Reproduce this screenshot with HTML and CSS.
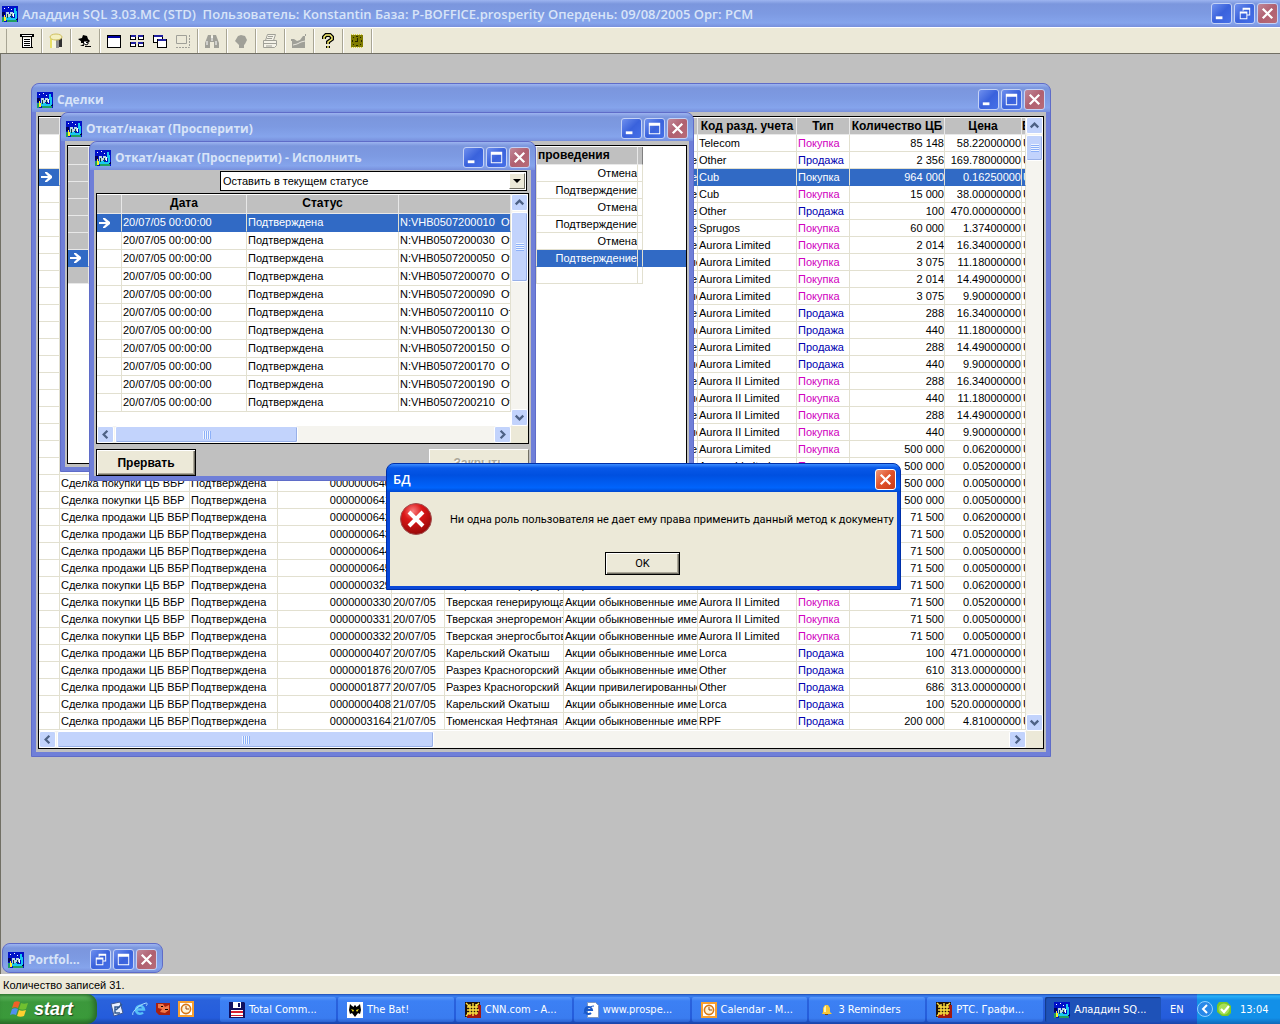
FILE: index.html
```html
<!DOCTYPE html>
<html lang="ru">
<head>
  <meta charset="UTF-8" />
  <meta name="viewport" content="width=device-width, initial-scale=1" />
  <title>Аладдин SQL</title>
  <link rel="stylesheet" href="styles.css">
</head>
<body>
  <!-- Shared icons -->
  <svg width="0" height="0" class="defs">
    <symbol id="app" viewBox="0 0 16 16">
      <path fill="#0010c8" d="M0 0h16v16H0z"/>
      <path fill="#000058" d="M0 6h3v4H0zM12 12h4v2h-4z"/>
      <path fill="#18c8f0" d="M12 2h2v3h1v8h-2V8h-1zM4 11h5v3H4zM9 12h5v2H9z"/>
      <path fill="#b8d8e0" d="M4 6h3v5H4zM8 6h3v4H8zM7 8h1v3H7z"/>
      <path fill="#104048" d="M5 8h1v4H5zM9 8h1v4H9z"/>
      <path fill="#fff" d="M2 2h1v1H2zM6 1h1v1H6zM9 3h1v1H9zM11 7h1v4h-1z"/>
      <path fill="#20a060" d="M0 11h2v5H0zM5 14h10v2H5z"/>
      <path fill="#ffee30" d="M2 9h1v2h1v4H2z"/>
    </symbol>
    <symbol id="min" viewBox="0 0 20 20"><path fill="#fff" d="M4 13h7v3H4z"/></symbol>
    <symbol id="max" viewBox="0 0 20 20"><path fill="#fff" fill-rule="evenodd" d="M4 4h12v12H4zM5 7v8h10V7z"/></symbol>
    <symbol id="restore" viewBox="0 0 20 20"><path fill="#fff" fill-rule="evenodd" d="M8 4h8v8h-3v-1h2V6H9v1H8zM5 8h8v8H5zM6 10v5h6v-5z"/></symbol>
    <symbol id="close" viewBox="0 0 20 20"><path stroke="#fff" stroke-width="2.4" d="M5 5l10 10M15 5L5 15"/></symbol>
    <symbol id="up" viewBox="0 0 16 16"><path fill="none" stroke="#4d6185" stroke-width="2.4" d="M4 10l4-4 4 4"/></symbol>
    <symbol id="down" viewBox="0 0 16 16"><path fill="none" stroke="#4d6185" stroke-width="2.4" d="M4 6l4 4 4-4"/></symbol>
    <symbol id="left" viewBox="0 0 16 16"><path fill="none" stroke="#4d6185" stroke-width="2.4" d="M10 4L6 8l4 4"/></symbol>
    <symbol id="right" viewBox="0 0 16 16"><path fill="none" stroke="#4d6185" stroke-width="2.4" d="M6 4l4 4-4 4"/></symbol>
    <symbol id="cur" viewBox="0 0 12 10"><path fill="#fff" d="M0 4h7L4 1V0h2l5 4v2l-5 4H4V9l3-3H0z"/></symbol>
    <symbol id="rts" viewBox="0 0 16 16">
      <path fill="#201008" d="M0 0h15v15H0z"/><path fill="#a01810" d="M2 12h14v4H2zM13 3h3v12h-3z"/>
      <path stroke="#ffe040" stroke-width="1.4" d="M2 5h11M2 8h12M2 11h11M5 2v11M8 1v13M11 2v11M1 1l3 3M14 1l-3 3M1 14l3-3"/>
    </symbol>
    <symbol id="clock" viewBox="0 0 16 16">
      <path fill="#f8a030" d="M0 0h16v16H0z"/><path fill="#fff" d="M2 2h12v12H2z"/>
      <circle cx="8" cy="8" r="4.6" fill="#fff4d8" stroke="#d87818" stroke-width="1.6"/><path fill="none" stroke="#a04808" d="M8 5v3h3"/>
    </symbol>
  </svg>

  <header class="app-title">
    <svg class="ico"><use href="#app"/></svg>
    <h1>Аладдин SQL 3.03.MC (STD) &nbsp;Пользователь: Konstantin База: P-BOFFICE.prosperity Опердень: 09/08/2005 Орг: РСМ</h1>
    <div class="ctl">
      <button aria-label="Свернуть"><svg><use href="#min"/></svg></button>
      <button aria-label="Восстановить"><svg><use href="#restore"/></svg></button>
      <button class="x" aria-label="Закрыть"><svg><use href="#close"/></svg></button>
    </div>
  </header>

  <nav class="toolbar">
    <div class="group first">
      <button aria-label="Список"><svg viewBox="0 0 16 16"><path d="M1 1h14v3H1zM3 4h1v11H3zM12 4h1v11h-1zM3 14h11v1H3z"/><path fill="#fff" d="M3 2h10v1H3zM4 5h8v9H4z"/><path d="M5 6h6v1H5zM5 8h6v1H5zM5 10h6v1H5zM5 12h6v1H5z"/></svg></button>
    </div>
    <div class="group">
      <button aria-label="База"><svg viewBox="0 0 16 16"><path fill="#e8e068" d="M2 3h6v12H2z"/><path fill="#f8f8e0" d="M4 4h4v11H4z"/><path fill="#909090" d="M8 4h3v11H8z"/><path d="M11 5h3v9h-3z" fill="#303030"/><ellipse cx="8" cy="4" rx="6" ry="3" fill="#f4f0c0" stroke="#d0c060"/></svg></button>
    </div>
    <div class="group">
      <button aria-label="Агент"><svg viewBox="0 0 16 16"><path d="M1 6l4-1 1-3 4 1 1 3 2 2-1 1H5z"/><path fill="#fff" stroke="#000" d="M6 8h5v3l-2 1-3-2z"/><path d="M4 8h3v2H4zM9 9h2v1H9zM3 13l4-2v2zM8 13h6v1H8z"/></svg></button>
    </div>
    <div class="group">
      <button aria-label="Окно"><svg viewBox="0 0 16 16"><path d="M1 2h14v13H1z"/><path fill="#0000a0" d="M2 3h12v2H2z"/><path fill="#fff" d="M2 5h12v9H2z"/></svg></button>
      <button aria-label="Мозаика"><svg viewBox="0 0 16 16"><path d="M1 2h6v5H1zM9 2h6v5H9zM1 9h6v5H1zM9 9h6v5H9z"/><path fill="#2020a0" d="M2 2h5v2H2zM9 2h5v2H9zM2 9h5v2H2zM9 9h5v2H9z"/><path fill="#fff" d="M2 4h4v2H2zM10 4h4v2h-4zM2 11h4v2H2zM10 11h4v2h-4z"/></svg></button>
      <button aria-label="Каскад"><svg viewBox="0 0 16 16"><path d="M1 2h10v8H1zM5 6h10v9H5z"/><path fill="#2020a0" d="M2 2h9v2H2zM6 6h8v2H6z"/><path fill="#fff" d="M2 4h8v2H5v3H2zM6 8h8v6H6z"/></svg></button>
      <button aria-label="Упорядочить" disabled><svg viewBox="0 0 16 16"><path fill="none" stroke="#a0a098" d="M1.500 2.500h10v8h-10z"/><path fill="none" stroke="#a0a098" stroke-dasharray="2 1" d="M1 14.500h13.500V2"/></svg></button>
    </div>
    <div class="group">
      <button aria-label="Найти" disabled><svg viewBox="0 0 16 16"><path fill="#a0a098" d="M4 2h3v3h2V2h3l3 8v5h-5V9H6v6H1v-5z"/><path stroke="#fff" d="M3 8v4M12 8v4M8 3v5"/></svg></button>
    </div>
    <div class="group">
      <button aria-label="Стоп" disabled><svg viewBox="0 0 16 16"><path fill="#a0a098" d="M5 3l3-1 4 1 2 4-2 4-1 1v3H6v-3L2 8z"/></svg></button>
    </div>
    <div class="group">
      <button aria-label="Печать" disabled><svg viewBox="0 0 16 16"><path fill="#f4f2e8" stroke="#a0a098" d="M5.500 1.500h8l-2 6h-8zM1.500 7.500h13v5l-2 2h-11z"/><path stroke="#a0a098" d="M6 3.500h5M5 5.500h5M2 10.500h12M4 13h6"/></svg></button>
    </div>
    <div class="group">
      <button aria-label="График" disabled><svg viewBox="0 0 16 16"><path fill="#a0a098" d="M0 6h3l3 2 3-1 3-4h2V1h1v2h-1v12H1V8H0z"/><path stroke="#e8e6dc" fill="none" d="M2 12l4-1 4-2 4-1"/></svg></button>
    </div>
    <div class="group">
      <button aria-label="Справка"><svg viewBox="0 0 16 16"><path fill="none" stroke="#000" stroke-width="4" d="M4 6V4l2-2h4l2 2v2l-4 3v2M8 13v2"/><path fill="none" stroke="#f8f070" stroke-width="1.500" d="M4 6V4l2-2h4l2 2v2l-4 3v2M8 13v2"/></svg></button>
    </div>
    <div class="group">
      <button aria-label="Часы"><svg viewBox="0 0 16 16"><path fill="#807c00" d="M2 2h12v12H2z"/><path fill="#282800" d="M7 3h2v1H7zM4 4h1v1H4zM11 4h1v1h-1zM3 7h1v2H3zM12 7h1v2h-1zM7 12h2v1H7zM4 11h1v1H4zM11 11h1v1h-1zM8 5h1v3H8zM6 8h3v1H6z"/><path fill="none" stroke="#d8d040" stroke-dasharray="1 1" d="M2 1.500h12M2 14.500h12"/></svg></button>
    </div>
  </nav>

  <main class="workspace">
    <!-- Сделки -->
    <section class="win win-deals">
      <header class="bar">
        <svg class="ico"><use href="#app"/></svg>
        <h2>Сделки</h2>
        <div class="ctl">
          <button aria-label="Свернуть"><svg><use href="#min"/></svg></button>
          <button aria-label="Развернуть"><svg><use href="#max"/></svg></button>
          <button class="x" aria-label="Закрыть"><svg><use href="#close"/></svg></button>
        </div>
      </header>
      <div class="client">
        <div class="grid">
          <div class="view">
            <table class="deals">
              <colgroup><col class="c-sel"><col class="c-kind"><col class="c-state"><col class="c-num"><col class="c-date"><col class="c-issuer"><col class="c-paper"><col class="c-code"><col class="c-type"><col class="c-qty"><col class="c-price"><col></colgroup>
              <thead>
                <tr><th></th><th></th><th></th><th></th><th></th><th></th><th></th><th>Код разд. учета</th><th>Тип</th><th>Количество ЦБ</th><th>Цена</th><th class="cut">В</th></tr>
              </thead>
              <tbody>
                <tr><td></td><td></td><td></td><td></td><td></td><td></td><td></td><td>Telecom</td><td class="buy">Покупка</td><td>85 148</td><td>58.22000000</td><td>U</td></tr>
                <tr><td></td><td></td><td></td><td></td><td></td><td></td><td>Акции обыкновенные именные</td><td>Other</td><td class="sell">Продажа</td><td>2 356</td><td>169.78000000</td><td>U</td></tr>
                <tr class="on"><td><svg class="cur"><use href="#cur"/></svg></td><td></td><td></td><td></td><td></td><td></td><td>Акции обыкновенные именные</td><td>Cub</td><td>Покупка</td><td>964 000</td><td>0.16250000</td><td>U</td></tr>
                <tr><td></td><td></td><td></td><td></td><td></td><td></td><td>Акции обыкновенные именные</td><td>Cub</td><td class="buy">Покупка</td><td>15 000</td><td>38.00000000</td><td>U</td></tr>
                <tr><td></td><td></td><td></td><td></td><td></td><td></td><td>Акции обыкновенные именные</td><td>Other</td><td class="sell">Продажа</td><td>100</td><td>470.00000000</td><td>U</td></tr>
                <tr><td></td><td></td><td></td><td></td><td></td><td></td><td>Акции обыкновенные именные</td><td>Sprugos</td><td class="buy">Покупка</td><td>60 000</td><td>1.37400000</td><td>U</td></tr>
                <tr><td></td><td></td><td></td><td></td><td></td><td></td><td>Акции обыкновенные именные</td><td>Aurora Limited</td><td class="buy">Покупка</td><td>2 014</td><td>16.34000000</td><td>U</td></tr>
                <tr><td></td><td></td><td></td><td></td><td></td><td></td><td>Акции привилегированные</td><td>Aurora Limited</td><td class="buy">Покупка</td><td>3 075</td><td>11.18000000</td><td>U</td></tr>
                <tr><td></td><td></td><td></td><td></td><td></td><td></td><td>Акции обыкновенные именные</td><td>Aurora Limited</td><td class="buy">Покупка</td><td>2 014</td><td>14.49000000</td><td>U</td></tr>
                <tr><td></td><td></td><td></td><td></td><td></td><td></td><td>Акции привилегированные</td><td>Aurora Limited</td><td class="buy">Покупка</td><td>3 075</td><td>9.90000000</td><td>U</td></tr>
                <tr><td></td><td></td><td></td><td></td><td></td><td></td><td>Акции обыкновенные именные</td><td>Aurora Limited</td><td class="sell">Продажа</td><td>288</td><td>16.34000000</td><td>U</td></tr>
                <tr><td></td><td></td><td></td><td></td><td></td><td></td><td>Акции привилегированные</td><td>Aurora Limited</td><td class="sell">Продажа</td><td>440</td><td>11.18000000</td><td>U</td></tr>
                <tr><td></td><td></td><td></td><td></td><td></td><td></td><td>Акции обыкновенные именные</td><td>Aurora Limited</td><td class="sell">Продажа</td><td>288</td><td>14.49000000</td><td>U</td></tr>
                <tr><td></td><td></td><td></td><td></td><td></td><td></td><td>Акции привилегированные</td><td>Aurora Limited</td><td class="sell">Продажа</td><td>440</td><td>9.90000000</td><td>U</td></tr>
                <tr><td></td><td></td><td></td><td></td><td></td><td></td><td>Акции обыкновенные именные</td><td>Aurora II Limited</td><td class="buy">Покупка</td><td>288</td><td>16.34000000</td><td>U</td></tr>
                <tr><td></td><td></td><td></td><td></td><td></td><td></td><td>Акции привилегированные</td><td>Aurora II Limited</td><td class="buy">Покупка</td><td>440</td><td>11.18000000</td><td>U</td></tr>
                <tr><td></td><td></td><td></td><td></td><td></td><td></td><td>Акции обыкновенные именные</td><td>Aurora II Limited</td><td class="buy">Покупка</td><td>288</td><td>14.49000000</td><td>U</td></tr>
                <tr><td></td><td></td><td></td><td></td><td></td><td></td><td>Акции привилегированные</td><td>Aurora II Limited</td><td class="buy">Покупка</td><td>440</td><td>9.90000000</td><td>U</td></tr>
                <tr><td></td><td></td><td></td><td></td><td></td><td></td><td>Акции обыкновенные именные</td><td>Aurora Limited</td><td class="buy">Покупка</td><td>500 000</td><td>0.06200000</td><td>U</td></tr>
                <tr><td></td><td></td><td></td><td></td><td></td><td></td><td>Акции обыкновенные именные</td><td>Aurora Limited</td><td class="buy">Покупка</td><td>500 000</td><td>0.05200000</td><td>U</td></tr>
                <tr><td></td><td>Сделка покупки ЦБ ВБР</td><td>Подтверждена</td><td>0000000640</td><td></td><td></td><td></td><td></td><td></td><td>500 000</td><td>0.00500000</td><td>U</td></tr>
                <tr><td></td><td>Сделка покупки ЦБ ВБР</td><td>Подтверждена</td><td>0000000641</td><td></td><td></td><td></td><td></td><td></td><td>500 000</td><td>0.00500000</td><td>U</td></tr>
                <tr><td></td><td>Сделка продажи ЦБ ВБР</td><td>Подтверждена</td><td>0000000642</td><td></td><td></td><td></td><td></td><td></td><td>71 500</td><td>0.06200000</td><td>U</td></tr>
                <tr><td></td><td>Сделка продажи ЦБ ВБР</td><td>Подтверждена</td><td>0000000643</td><td></td><td></td><td></td><td></td><td></td><td>71 500</td><td>0.05200000</td><td>U</td></tr>
                <tr><td></td><td>Сделка продажи ЦБ ВБР</td><td>Подтверждена</td><td>0000000644</td><td></td><td></td><td></td><td></td><td></td><td>71 500</td><td>0.00500000</td><td>U</td></tr>
                <tr><td></td><td>Сделка продажи ЦБ ВБР</td><td>Подтверждена</td><td>0000000645</td><td></td><td></td><td></td><td></td><td></td><td>71 500</td><td>0.00500000</td><td>U</td></tr>
                <tr><td></td><td>Сделка покупки ЦБ ВБР</td><td>Подтверждена</td><td>0000000329</td><td>20/07/05</td><td>Тверская генерирующая</td><td>Акции обыкновенные именные</td><td>Aurora II Limited</td><td class="buy">Покупка</td><td>71 500</td><td>0.06200000</td><td>U</td></tr>
                <tr><td></td><td>Сделка покупки ЦБ ВБР</td><td>Подтверждена</td><td>0000000330</td><td>20/07/05</td><td>Тверская генерирующая</td><td>Акции обыкновенные именные</td><td>Aurora II Limited</td><td class="buy">Покупка</td><td>71 500</td><td>0.05200000</td><td>U</td></tr>
                <tr><td></td><td>Сделка покупки ЦБ ВБР</td><td>Подтверждена</td><td>0000000331</td><td>20/07/05</td><td>Тверская энергоремонтная</td><td>Акции обыкновенные именные</td><td>Aurora II Limited</td><td class="buy">Покупка</td><td>71 500</td><td>0.00500000</td><td>U</td></tr>
                <tr><td></td><td>Сделка покупки ЦБ ВБР</td><td>Подтверждена</td><td>0000000332</td><td>20/07/05</td><td>Тверская энергосбытовая</td><td>Акции обыкновенные именные</td><td>Aurora II Limited</td><td class="buy">Покупка</td><td>71 500</td><td>0.00500000</td><td>U</td></tr>
                <tr><td></td><td>Сделка продажи ЦБ ВБР</td><td>Подтверждена</td><td>0000000407</td><td>20/07/05</td><td>Карельский Окатыш</td><td>Акции обыкновенные именные</td><td>Lorca</td><td class="sell">Продажа</td><td>100</td><td>471.00000000</td><td>U</td></tr>
                <tr><td></td><td>Сделка продажи ЦБ ВБР</td><td>Подтверждена</td><td>0000001876</td><td>20/07/05</td><td>Разрез Красногорский</td><td>Акции обыкновенные именные</td><td>Other</td><td class="sell">Продажа</td><td>610</td><td>313.00000000</td><td>U</td></tr>
                <tr><td></td><td>Сделка продажи ЦБ ВБР</td><td>Подтверждена</td><td>0000001877</td><td>20/07/05</td><td>Разрез Красногорский</td><td>Акции привилегированные</td><td>Other</td><td class="sell">Продажа</td><td>686</td><td>313.00000000</td><td>U</td></tr>
                <tr><td></td><td>Сделка продажи ЦБ ВБР</td><td>Подтверждена</td><td>0000000408</td><td>21/07/05</td><td>Карельский Окатыш</td><td>Акции обыкновенные именные</td><td>Lorca</td><td class="sell">Продажа</td><td>100</td><td>520.00000000</td><td>U</td></tr>
                <tr><td></td><td>Сделка продажи ЦБ ВБР</td><td>Подтверждена</td><td>0000003164</td><td>21/07/05</td><td>Тюменская Нефтяная</td><td>Акции обыкновенные именные</td><td>RPF</td><td class="sell">Продажа</td><td>200 000</td><td>4.81000000</td><td>U</td></tr>
              </tbody>
            </table>
          </div>
          <div class="vscroll">
            <button aria-label="Вверх"><svg><use href="#up"/></svg></button>
            <div class="thumb short"></div>
            <button aria-label="Вниз"><svg><use href="#down"/></svg></button>
          </div>
          <div class="hscroll">
            <button aria-label="Влево"><svg><use href="#left"/></svg></button>
            <div class="thumb wide"></div>
            <button aria-label="Вправо"><svg><use href="#right"/></svg></button>
          </div>
          <div class="corner"></div>
        </div>
      </div>
    </section>

    <!-- Откат/накат -->
    <section class="win win-rollback">
      <header class="bar">
        <svg class="ico"><use href="#app"/></svg>
        <h2>Откат/накат (Просперити)</h2>
        <div class="ctl">
          <button aria-label="Свернуть"><svg><use href="#min"/></svg></button>
          <button aria-label="Развернуть"><svg><use href="#max"/></svg></button>
          <button class="x" aria-label="Закрыть"><svg><use href="#close"/></svg></button>
        </div>
      </header>
      <div class="client">
        <div class="grid single">
          <table class="methods">
            <colgroup><col class="m-sel"><col class="m-name"><col class="m-act"><col class="m-end"><col></colgroup>
            <thead>
              <tr><th></th><th></th><th>проведения</th><th class="edge"></th><td class="out"></td></tr>
            </thead>
            <tbody>
              <tr><th></th><td></td><td>Отмена</td><td></td><td class="out"></td></tr>
              <tr><th></th><td></td><td>Подтверждение</td><td></td><td class="out"></td></tr>
              <tr><th></th><td></td><td>Отмена</td><td></td><td class="out"></td></tr>
              <tr><th></th><td></td><td>Подтверждение</td><td></td><td class="out"></td></tr>
              <tr><th></th><td></td><td>Отмена</td><td></td><td class="out"></td></tr>
              <tr class="on"><th><svg class="cur"><use href="#cur"/></svg></th><td></td><td>Подтверждение</td><td></td><td class="out"></td></tr>
              <tr><th></th><td></td><td></td><td></td><td class="out"></td></tr>
            </tbody>
          </table>
        </div>
      </div>
    </section>

    <!-- Исполнить -->
    <section class="win win-run">
      <header class="bar">
        <svg class="ico"><use href="#app"/></svg>
        <h2>Откат/накат (Просперити) - Исполнить</h2>
        <div class="ctl">
          <button aria-label="Свернуть"><svg><use href="#min"/></svg></button>
          <button aria-label="Развернуть"><svg><use href="#max"/></svg></button>
          <button class="x" aria-label="Закрыть"><svg><use href="#close"/></svg></button>
        </div>
      </header>
      <div class="client">
        <div class="combo">
          <select aria-label="Статус"><option>Оставить в текущем статусе</option></select>
          <span class="drop"></span>
        </div>
        <div class="grid">
          <div class="view">
            <table class="docs">
              <colgroup><col class="d-sel"><col class="d-date"><col class="d-state"><col></colgroup>
              <thead>
                <tr><th></th><th>Дата</th><th>Статус</th><th></th></tr>
              </thead>
              <tbody>
                <tr class="on"><td><svg class="cur"><use href="#cur"/></svg></td><td>20/07/05 00:00:00</td><td>Подтверждена</td><td>N:VHB0507200010 &nbsp;От</td></tr>
                <tr><td></td><td>20/07/05 00:00:00</td><td>Подтверждена</td><td>N:VHB0507200030 &nbsp;От</td></tr>
                <tr><td></td><td>20/07/05 00:00:00</td><td>Подтверждена</td><td>N:VHB0507200050 &nbsp;От</td></tr>
                <tr><td></td><td>20/07/05 00:00:00</td><td>Подтверждена</td><td>N:VHB0507200070 &nbsp;От</td></tr>
                <tr><td></td><td>20/07/05 00:00:00</td><td>Подтверждена</td><td>N:VHB0507200090 &nbsp;От</td></tr>
                <tr><td></td><td>20/07/05 00:00:00</td><td>Подтверждена</td><td>N:VHB0507200110 &nbsp;От</td></tr>
                <tr><td></td><td>20/07/05 00:00:00</td><td>Подтверждена</td><td>N:VHB0507200130 &nbsp;От</td></tr>
                <tr><td></td><td>20/07/05 00:00:00</td><td>Подтверждена</td><td>N:VHB0507200150 &nbsp;От</td></tr>
                <tr><td></td><td>20/07/05 00:00:00</td><td>Подтверждена</td><td>N:VHB0507200170 &nbsp;От</td></tr>
                <tr><td></td><td>20/07/05 00:00:00</td><td>Подтверждена</td><td>N:VHB0507200190 &nbsp;От</td></tr>
                <tr><td></td><td>20/07/05 00:00:00</td><td>Подтверждена</td><td>N:VHB0507200210 &nbsp;От</td></tr>
              </tbody>
            </table>
          </div>
          <div class="vscroll">
            <button aria-label="Вверх"><svg><use href="#up"/></svg></button>
            <div class="thumb tall"></div>
            <button aria-label="Вниз"><svg><use href="#down"/></svg></button>
          </div>
          <div class="hscroll">
            <button aria-label="Влево"><svg><use href="#left"/></svg></button>
            <div class="thumb mid"></div>
            <button aria-label="Вправо"><svg><use href="#right"/></svg></button>
          </div>
          <div class="corner"></div>
        </div>
        <div class="actions">
          <button class="btn">Прервать</button>
          <button class="btn" disabled>Закрыть</button>
        </div>
      </div>
    </section>

    <!-- Minimized window -->
    <section class="win win-min">
      <header class="bar">
        <svg class="ico"><use href="#app"/></svg>
        <h2>Portfol...</h2>
        <div class="ctl">
          <button aria-label="Восстановить"><svg><use href="#restore"/></svg></button>
          <button aria-label="Развернуть"><svg><use href="#max"/></svg></button>
          <button class="x" aria-label="Закрыть"><svg><use href="#close"/></svg></button>
        </div>
      </header>
    </section>

    <!-- Error message -->
    <section class="dialog" role="alertdialog" aria-labelledby="dlg-title">
      <header class="bar">
        <h2 id="dlg-title">БД</h2>
        <div class="ctl">
          <button class="x" aria-label="Закрыть"><svg><use href="#close"/></svg></button>
        </div>
      </header>
      <div class="dialog-body">
        <div class="message">
          <svg class="error" viewBox="0 0 32 32">
            <defs><radialGradient id="red" cx="40%" cy="25%" r="75%"><stop offset="0" stop-color="#f88080"/><stop offset=".4" stop-color="#dc1818"/><stop offset="1" stop-color="#980808"/></radialGradient></defs>
            <circle cx="16" cy="16" r="15.500" fill="url(#red)" stroke="#a05050"/>
            <path stroke="#fff" stroke-width="4" d="M9 9l14 14M23 9L9 23"/>
          </svg>
          <p>Ни одна роль пользователя не дает ему права применить данный метод к документу</p>
        </div>
        <button class="ok">OK</button>
      </div>
    </section>
  </main>

  <div class="status">Количество записей 31.</div>

  <footer class="taskbar">
    <button class="start">
      <svg viewBox="0 0 20 20"><path fill="#f06028" d="M4 3c2-1 4-1 6 0L8 9C6 8 4 8 2 9z"/><path fill="#70c030" d="M11 4c2 1 4 1 7 0l-2 6c-2 1-5 1-7 0z"/><path fill="#5090f0" d="M2 10c2-1 4-1 6 0l-2 6c-2-1-4-1-6 0z"/><path fill="#ffd030" d="M9 11c2 1 4 1 7 0l-2 6c-2 1-5 1-7 0z"/></svg>
      start
    </button>
    <div class="quick">
      <button aria-label="Рабочий стол"><svg viewBox="0 0 16 16"><path fill="#e8f0ff" stroke="#405890" d="M2 3l9-2 3 11-9 3z"/><path fill="none" stroke="#305890" stroke-width="1.500" d="M11 6H6v6h5M7 9l6-6"/></svg></button>
      <button aria-label="Internet Explorer"><svg viewBox="0 0 16 16"><path fill="none" stroke="#58c0f8" stroke-width="2.500" d="M4 8.500h8a4 4 0 1 0-1 3"/><path fill="none" stroke="#a8e0ff" d="M1 14C-1 12 6 4 14 2c2 0 1 2 0 3"/></svg></button>
      <button aria-label="Почта"><svg viewBox="0 0 16 16"><path fill="#a82010" d="M1 2h14v12H4L1 11z"/><path fill="#f07848" d="M3 3h5l2 3 4-2v5l-4 3-5-1 2-3-4-1z"/><path d="M6 5h2v1H6zM10 8h3v1h-3z"/></svg></button>
      <button aria-label="Календарь"><svg><use href="#clock"/></svg></button>
    </div>
    <div class="tasks">
      <button><svg viewBox="0 0 16 16"><path fill="#101060" d="M0 0h15l1 1v15H0z"/><path fill="#fff" d="M4 0h8v6H4zM2 8h12v7H2z"/><path fill="#101060" d="M9 1h2v4H9z"/><path fill="#d82030" d="M2 9h12v2H2zM2 13h12v1H2z"/></svg>Total Comm...</button>
      <button><svg viewBox="0 0 16 16"><path fill="#fff" d="M0 0h16v16H0z"/><path d="M3 2l2 2 2 1V3l1 1 1-1v2l2-1 2-2 1 6-1 4-2-1-3 4-3-4-2 1-1-4z"/><path fill="#f0e020" d="M4 7l3 1-1 2zM12 7L9 8l1 2z"/></svg>The Bat!</button>
      <button><svg><use href="#rts"/></svg>CNN.com - A...</button>
      <button><svg viewBox="0 0 16 16"><path fill="#fff" stroke="#8098c0" d="M4.500.5h8l3 3v12h-11z"/><path fill="none" stroke="#1858c8" stroke-width="2" d="M3 8h6a3.500 3.500 0 1 0-1 3"/><path fill="none" stroke="#1858c8" d="M1 12c0-3 5-8 10-8"/></svg>www.prospe...</button>
      <button><svg><use href="#clock"/></svg>Calendar - M...</button>
      <button><svg viewBox="0 0 16 16"><path fill="#f8c838" d="M7 3h3l2 3v4l2 2H4l1-2V6z"/><path fill="#fff4b0" d="M7 4h1v6H6V6z"/><path fill="#804808" d="M7 12h3v1H7z"/></svg>3 Reminders</button>
      <button><svg><use href="#rts"/></svg>РТС. Графи...</button>
      <button class="active"><svg><use href="#app"/></svg>Аладдин SQ...</button>
    </div>
    <span class="lang">EN</span>
    <div class="tray">
      <button class="chev" aria-label="Показать"><svg viewBox="0 0 16 16"><circle cx="8" cy="8" r="7.500" fill="#2888e8" stroke="#90d0ff"/><path fill="none" stroke="#fff" stroke-width="2" d="M10 4L6 8l4 4"/></svg></button>
      <svg viewBox="0 0 16 16"><path fill="#78c828" d="M3 1h8l4 4v7l-3 3H6l-5-4V4z"/><circle cx="8" cy="8" r="5.500" fill="#a8e058"/><path fill="none" stroke="#fff" stroke-width="2.200" d="M5 8l3 3 5-6"/></svg>
      <time>13:04</time>
    </div>
  </footer>
</body>
</html>
```
FILE: styles.css
```css
* {
  box-sizing: border-box;
}
body {
  margin: 0;
  height: 100vh;
  display: flex;
  flex-direction: column;
  overflow: hidden;
  background: #ece9d8;
  color: #000;
  font-family: "Liberation Sans", Arial, sans-serif;
  font-size: 11px;
  user-select: none;
}
button {
  font: inherit;
  padding: 0;
  margin: 0;
  border: 0;
  background: none;
  color: inherit;
}
h1, h2, p {
  margin: 0;
}
.defs {
  position: absolute;
}
.ico {
  width: 16px;
  height: 16px;
  flex: none;
}

/* Title bars */
.app-title, .bar {
  display: flex;
  align-items: center;
  gap: 4px;
  background: linear-gradient(#9db4f0 0, #7b96dd 4px, #7d9ae2 50%, #85a4ec 85%, #7890dc 100%);
}
.app-title {
  height: 27px;
  padding: 0 2px;
  flex: none;
}
.app-title h1, .bar h2 {
  flex: 1;
  font-family: "Open Sans", "Trebuchet MS", sans-serif;
  font-size: 13px;
  font-weight: 600;
  line-height: 16px;
  color: #d8e4f8;
  white-space: nowrap;
  overflow: hidden;
}
.bar h2 {
  font-size: 12px;
  font-weight: bold;
}
.bar {
  height: 28px;
  padding: 3px 5px 0 5px;
  border-radius: 7px 7px 0 0;
}
.ctl {
  display: flex;
  gap: 2px;
}
.ctl button {
  width: 21px;
  height: 21px;
  border: 1px solid #c4d2f6;
  border-radius: 3px;
  background: linear-gradient(135deg, #6f90ee, #3a62dc 50%, #4670e8);
}
.ctl .x {
  background: linear-gradient(135deg, #c08898, #b06070 50%, #b86c78);
}
.ctl svg {
  display: block;
  width: 19px;
  height: 19px;
}

/* Toolbar */
.toolbar {
  flex: none;
  display: flex;
  align-items: center;
  height: 26px;
  padding: 0 6px;
  border-top: 1px solid #fff;
}
.group {
  display: flex;
  gap: 7px;
  height: 24px;
  align-items: center;
  padding: 0 6px;
  border-right: 1px solid #a8a594;
  box-shadow: 1px 0 #fff;
}
.group.first {
  padding-left: 12px;
  border-left: 1px solid #a8a594;
}
.group svg {
  display: block;
  width: 16px;
  height: 16px;
}

/* MDI area */
.workspace {
  position: relative;
  flex: 1;
  min-height: 0;
  overflow: hidden;
  background: #c0c0c0;
  border: 1px solid #716f64;
  border-width: 1px 0 0 1px;
}
.win {
  position: absolute;
  display: flex;
  flex-direction: column;
  background: #6f7fd8;
  border: 1px solid #5f6cc8;
  border-radius: 8px 8px 0 0;
}
.client {
  flex: 1;
  min-height: 0;
  display: flex;
  flex-direction: column;
  margin: 0 4px 4px;
  padding: 4px 2px 3px;
  background: #c0c0c0;
}
.win-deals {
  left: 30px;
  top: 29px;
  width: 1020px;
  height: 674px;
}
.win-rollback {
  left: 59px;
  top: 58px;
  width: 634px;
  height: 360px;
}
.win-run {
  left: 88px;
  top: 87px;
  width: 447px;
  height: 340px;
}
.win-run .client {
  padding: 1px 2px 0;
}
.win-min {
  left: 1px;
  bottom: 1px;
  width: 161px;
  border-radius: 8px;
}
.win-min .bar {
  border-radius: 7px;
}

/* Data grids */
.grid {
  flex: 1;
  min-height: 0;
  display: grid;
  grid-template-columns: 1fr 17px;
  grid-template-rows: 1fr 17px;
  border: 1px solid #000;
  background: #fff;
}
.grid.single {
  display: block;
  overflow: hidden;
}
.view {
  overflow: hidden;
  min-width: 0;
}
table {
  width: 100%;
  table-layout: fixed;
  border-collapse: separate;
  border-spacing: 0;
  margin-top: 1px;
}
th, td {
  height: 17px;
  padding: 0 0 0 1px;
  line-height: 16px;
  border-right: 1px solid #e2e0d0;
  border-bottom: 1px solid #e2e0d0;
  overflow: hidden;
  white-space: nowrap;
  text-align: left;
  font-weight: normal;
}
th {
  background: #c0c0c0;
  border-color: #e8e8e8;
}
thead th {
  padding: 0;
  font-size: 12px;
  font-weight: bold;
  text-align: center;
  vertical-align: top;
}
tr.on td, tr.on th {
  background: #316ac5;
  border-bottom-color: #316ac5;
  color: #fff;
}
.cur {
  display: block;
  width: 12px;
  height: 10px;
  margin-left: 1px;
}
.buy { color: #d000c0; }
.sell { color: #0000b0; }

.deals td:nth-child(4),
.deals td:nth-child(10),
.deals td:nth-child(11) {
  text-align: right;
}
.deals .cut {
  text-align: left;
}
.c-sel { width: 21px; }
.c-kind { width: 130px; }
.c-state { width: 88px; }
.c-num { width: 114px; }
.c-date { width: 53px; }
.c-issuer { width: 119px; }
.c-paper { width: 134px; }
.c-code { width: 99px; }
.c-type { width: 53px; }
.c-qty { width: 95px; }
.c-price { width: 77px; }

.methods td:nth-child(3) {
  text-align: right;
}
.methods thead th {
  height: 18px;
  padding-left: 1px;
  text-align: left;
}
.methods .out {
  border-color: transparent;
}
.methods .edge {
  border-right-color: #808080;
}
.m-sel { width: 21px; }
.m-name { width: 448px; }
.m-act { width: 101px; }
.m-end { width: 5px; }

.docs td {
  height: 18px;
  line-height: 17px;
}
.docs th {
  height: 19px;
}
.d-sel { width: 25px; }
.d-date { width: 125px; }
.d-state { width: 152px; }

/* Scrollbars */
.vscroll, .hscroll {
  display: flex;
  gap: 1px;
  background: #f5f4ef;
}
.vscroll {
  flex-direction: column;
}
.vscroll button, .hscroll button {
  flex: none;
  width: 17px;
  height: 17px;
  border: 1px solid #fff;
  border-radius: 2px;
  background: #c2d3fc;
}
.vscroll button:last-child {
  margin-top: auto;
}
.hscroll button:last-child {
  margin-left: auto;
}
.vscroll svg, .hscroll svg {
  display: block;
  width: 15px;
  height: 15px;
}
.thumb {
  display: flex;
  align-items: center;
  justify-content: center;
  border: 1px solid #fff;
  border-radius: 2px;
  background: #c2d3fc;
  box-shadow: inset -1px -1px #98b0e8;
}
.thumb::after {
  content: "";
  width: 8px;
  height: 8px;
}
.vscroll .thumb::after {
  background: repeating-linear-gradient(#eef4fe 0 1px, #8cb0f8 1px 2px);
}
.hscroll .thumb::after {
  background: repeating-linear-gradient(90deg, #eef4fe 0 1px, #8cb0f8 1px 2px);
}
.short { height: 26px; }
.tall { height: 70px; }
.wide { width: 377px; }
.mid { width: 183px; }
.corner {
  background: #ece9d8;
}

/* Execute window */
.combo {
  position: relative;
  width: 307px;
  margin: 0 2px 2px auto;
}
.combo select {
  display: block;
  appearance: none;
  width: 100%;
  height: 20px;
  padding: 0 2px;
  border: 1px solid #000;
  border-radius: 0;
  background: #fff;
  color: #000;
  font: inherit;
}
.drop {
  position: absolute;
  top: 2px;
  right: 2px;
  width: 16px;
  height: 16px;
  background: #ece9d8;
  border: 1px solid;
  border-color: #fff #716f64 #716f64 #fff;
  pointer-events: none;
}
.drop::after {
  content: "";
  display: block;
  margin: 5px 3px;
  border: 4px solid transparent;
  border-top-color: #000;
  border-bottom: 0;
}
.actions {
  display: flex;
  justify-content: space-between;
  padding-top: 5px;
}
.btn, .ok {
  background: #ece9d8;
  border: 1px solid #000;
  box-shadow: inset 1px 1px #fff, inset -1px -1px #716f64, inset -2px -2px #aca899;
}
.btn {
  width: 100px;
  height: 27px;
  font-size: 12px;
  font-weight: bold;
}
.btn:disabled {
  color: #aca899;
  border-color: #fff #716f64 #716f64 #fff;
  box-shadow: none;
  text-shadow: 1px 1px #fff;
}

/* Message box */
.dialog {
  position: absolute;
  left: 385px;
  top: 409px;
  width: 515px;
  padding: 0 3px 3px;
  background: #0a48d8;
  border: 1px solid #0030a8;
  border-radius: 8px 8px 0 0;
}
.dialog .bar {
  margin: 0 -3px;
  padding: 2px 4px 0 6px;
  background: linear-gradient(#3c8cff 0, #0858e8 4px, #0050e0 40%, #0064fc 85%, #0048d0 100%);
}
.dialog h2 {
  color: #fff;
  font-size: 13px;
  font-weight: 600;
}
.dialog .x {
  border-color: #fff;
  background: linear-gradient(135deg, #f09878, #e05028 50%, #c83c18);
}
.dialog-body {
  padding: 11px 12px 11px 10px;
  background: #ece9d8;
  font-family: Roboto, Tahoma, sans-serif;
  text-align: center;
}
.message {
  display: flex;
  align-items: center;
  gap: 18px;
  margin-bottom: 17px;
  white-space: nowrap;
}
.error {
  flex: none;
  width: 32px;
  height: 32px;
}
.ok {
  display: block;
  margin: 0 auto;
  width: 75px;
  height: 23px;
}

/* Status bar and taskbar */
.status {
  flex: none;
  height: 20px;
  padding: 0 3px;
  border-top: 2px solid #fff;
  line-height: 19px;
}
.taskbar {
  flex: none;
  display: flex;
  align-items: stretch;
  height: 30px;
  background: linear-gradient(#1f4cb0 0, #3a80f0 2px, #2a62dc 6px, #245cdc 80%, #1a44a8 100%);
  color: #fff;
  font-family: "DejaVu Sans Condensed", Tahoma, sans-serif;
}
.taskbar svg {
  display: block;
  flex: none;
  width: 16px;
  height: 16px;
}
.start {
  display: flex;
  align-items: center;
  gap: 4px;
  width: 97px;
  padding-left: 10px;
  border-radius: 0 10px 10px 0;
  background: linear-gradient(#3c8c3c 0, #58b058 3px, #3c983c 8px, #3a9a3a 80%, #2a702a 100%);
  box-shadow: inset -3px 0 5px #286828;
  font-family: "Liberation Sans", Arial, sans-serif;
  font-size: 18px;
  font-weight: bold;
  font-style: italic;
  text-shadow: 1px 1px 1px #204820;
}
.taskbar .start svg {
  width: 20px;
  height: 20px;
}
.quick {
  display: flex;
  align-items: center;
  gap: 7px;
  width: 123px;
  padding-left: 12px;
}
.tasks {
  flex: 1;
  min-width: 0;
  display: flex;
  gap: 2px;
  padding: 3px 0 2px;
}
.tasks button {
  flex: 1;
  min-width: 0;
  display: flex;
  align-items: center;
  gap: 4px;
  padding-left: 9px;
  border-radius: 2px;
  background: linear-gradient(#5a98fa 0, #3c80f4 4px, #3a7cf0 85%, #2c62d0 100%);
  white-space: nowrap;
}
.tasks .active {
  background: #1e52b8;
  box-shadow: inset 1px 1px 1px #123a88;
}
.lang {
  width: 36px;
  line-height: 31px;
  padding-left: 9px;
}
.tray {
  display: flex;
  align-items: center;
  gap: 3px;
  width: 83px;
  background: linear-gradient(#1470c0 0, #28b0f8 2px, #1290e8 6px, #1290e8 80%, #1068b8 100%);
}
.tray time {
  margin-left: 5px;
}
```
